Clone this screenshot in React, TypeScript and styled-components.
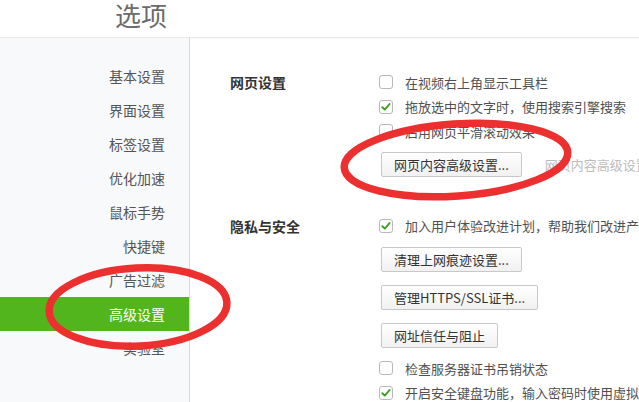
import styled, { createGlobalStyle } from "styled-components";

const GlobalStyle = createGlobalStyle`
  html, body {
    margin: 0;
    padding: 0;
    overflow: hidden;
    background: #fff;
  }
  body {
    font-family: "Noto Sans CJK SC", "Liberation Sans", sans-serif;
  }
`;

const navItems = [
  "基本设置",
  "界面设置",
  "标签设置",
  "优化加速",
  "鼠标手势",
  "快捷键",
  "广告过滤",
  "高级设置",
  "实验室",
];

const Page = styled.div`
  position: relative;
  width: 639px;
  height: 402px;
  overflow: hidden;
`;

const Header = styled.header`
  height: 37px;
  border-bottom: 1px solid #e8e8e8;
  box-shadow: 0 1px 2px rgba(0, 0, 0, 0.03);
  padding-left: 115px;
`;

const Title = styled.h1`
  margin: 0;
  font-size: 26px;
  line-height: 30px;
  font-weight: normal;
  color: #6b6b6b;
`;

const Body = styled.div`
  display: flex;
  height: 364px;
`;

const Sidebar = styled.nav`
  width: 189px;
  flex: none;
  background: #f8f9fb;
  border-right: 1px solid #d9d9d9;
  padding-top: 21px;
`;

const NavItem = styled.div<{ $active?: boolean }>`
  height: 34px;
  line-height: 34px;
  text-align: right;
  padding-right: 24px;
  font-size: 14px;
  color: ${(p) => (p.$active ? "#fff" : "#555")};
  background: ${(p) => (p.$active ? "#52b51e" : "transparent")};
`;

const Content = styled.main`
  flex: 1;
  padding: 32px 0 0 40px;
  white-space: nowrap;
`;

const Section = styled.section<{ $gap?: number }>`
  display: grid;
  grid-template-columns: 149px auto;
  margin-bottom: ${(p) => p.$gap ?? 0}px;
`;

const Heading = styled.h2`
  margin: 0;
  font-size: 14px;
  font-weight: bold;
  color: #333;
  line-height: 24px;
`;

const Options = styled.div`
  display: flex;
  flex-direction: column;
  align-items: flex-start;
`;

const Row = styled.label`
  display: flex;
  align-items: center;
  gap: 12px;
  height: 24.5px;
  font-size: 13px;
  color: #505050;
`;

const Box = styled.span`
  width: 14px;
  height: 14px;
  box-sizing: border-box;
  border: 1px solid #b8b8b8;
  border-radius: 3px;
  background: #fff;
  display: flex;
  align-items: center;
  justify-content: center;
`;

const ButtonLine = styled.div<{ $top: number }>`
  display: flex;
  align-items: center;
  gap: 23px;
  margin-top: ${(p) => p.$top}px;
`;

const Button = styled.button`
  height: 25px;
  padding: 0 12px;
  margin-left: 2px;
  font-family: inherit;
  font-size: 13px;
  color: #333;
  border: 1px solid #c8c8c8;
  border-radius: 2px;
  background: linear-gradient(#ffffff, #f1f1f1);
`;

const Hint = styled.span`
  font-size: 13px;
  color: #bdbdbd;
`;

const Marks = styled.svg`
  position: absolute;
  left: 0;
  top: 0;
  pointer-events: none;
`;

const Check = ({ checked }: { checked?: boolean }) => (
  <Box>
    {checked && (
      <svg width="12" height="12" viewBox="0 0 12 12">
        <path
          d="M2.3 6.2 L4.8 8.6 L9.6 3"
          fill="none"
          stroke="#3c9e1c"
          strokeWidth="1.9"
          strokeLinecap="round"
          strokeLinejoin="round"
        />
      </svg>
    )}
  </Box>
);

const Option = ({ checked, children }: { checked?: boolean; children: string }) => (
  <Row>
    <Check checked={checked} />
    {children}
  </Row>
);

export default function App() {
  return (
    <Page>
      <GlobalStyle />
      <Header>
        <Title>选项</Title>
      </Header>
      <Body>
        <Sidebar>
          {navItems.map((item) => (
            <NavItem key={item} $active={item === "高级设置"}>
              {item}
            </NavItem>
          ))}
        </Sidebar>
        <Content>
          <Section $gap={37}>
            <Heading>网页设置</Heading>
            <Options>
              <Option>在视频右上角显示工具栏</Option>
              <Option checked>拖放选中的文字时，使用搜索引擎搜索</Option>
              <Option>启用网页平滑滚动效果</Option>
              <ButtonLine $top={8}>
                <Button>网页内容高级设置...</Button>
                <Hint>网页内容高级设置</Hint>
              </ButtonLine>
            </Options>
          </Section>
          <Section>
            <Heading>隐私与安全</Heading>
            <Options>
              <Option checked>加入用户体验改进计划，帮助我们改进产品</Option>
              <ButtonLine $top={9}>
                <Button>清理上网痕迹设置...</Button>
              </ButtonLine>
              <ButtonLine $top={13}>
                <Button>管理HTTPS/SSL证书...</Button>
              </ButtonLine>
              <ButtonLine $top={13}>
                <Button>网址信任与阻止</Button>
              </ButtonLine>
              <ButtonLine $top={8} />
              <Option>检查服务器证书吊销状态</Option>
              <Option checked>开启安全键盘功能，输入密码时使用虚拟键盘</Option>
            </Options>
          </Section>
        </Content>
      </Body>
      <Marks width="639" height="402" viewBox="0 0 639 402">
        <ellipse
          cx="456"
          cy="160"
          rx="112"
          ry="36"
          transform="rotate(-4 456 160)"
          fill="none"
          stroke="#ec2f2f"
          strokeWidth="7.5"
        />
        <ellipse
          cx="138"
          cy="307"
          rx="89"
          ry="39"
          transform="rotate(-3 138 307)"
          fill="none"
          stroke="#ec2f2f"
          strokeWidth="7.5"
        />
      </Marks>
    </Page>
  );
}
